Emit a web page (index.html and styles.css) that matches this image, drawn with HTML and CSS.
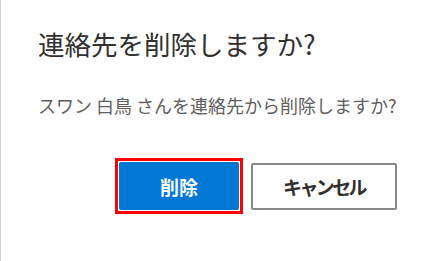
FILE: index.html
```html
<!DOCTYPE html>
<html lang="ja">
<head>
<meta charset="utf-8">
<link rel="stylesheet" href="styles.css">
</head>
<body>
<div class="dialog">
  <h1 class="title">連絡先を削除しますか?</h1>
  <p class="message">スワン 白鳥 さんを連絡先から削除しますか?</p>
  <div class="actions">
    <span class="focus-ring"><button class="btn btn-primary">削除</button></span>
    <button class="btn btn-default">キャンセル</button>
  </div>
</div>
</body>
</html>
```
FILE: styles.css
```css
html, body {
  margin: 0;
  padding: 0;
  background: #ffffff;
}
body {
  width: 430px;
  height: 261px;
  overflow: hidden;
  font-family: "Noto Sans CJK JP", "Noto Sans", sans-serif;
}
.dialog {
  box-sizing: border-box;
  height: 261px;
  border-left: 1px solid #d4d4d4;
  padding: 25px 33px 0 37px;
}
.title {
  margin: 0;
  font-size: 26.5px;
  font-weight: 400;
  line-height: 38px;
  color: #323130;
}
.message {
  margin: 29px 0 0 0;
  font-size: 18px;
  line-height: 26px;
  color: #605e5c;
}
.actions {
  display: flex;
  justify-content: flex-end;
  align-items: center;
  gap: 8px;
  margin-top: 40px;
}
.focus-ring {
  display: flex;
  border: 3px solid #ff0000;
  padding: 1px;
}
.btn {
  box-sizing: border-box;
  height: 48px;
  border-radius: 2px;
  font-family: inherit;
  font-size: 19px;
  font-weight: 700;
  cursor: pointer;
}
.btn-primary {
  width: 120px;
  background: #0078d4;
  color: #ffffff;
  border: none;
}
.btn-default {
  width: 146px;
  height: 47px;
  margin-top: 1px;
  background: #ffffff;
  color: #323130;
  border: 2px solid #8a8886;
  font-size: 19px;
  font-weight: 600;
  letter-spacing: -2.6px;
}
```
